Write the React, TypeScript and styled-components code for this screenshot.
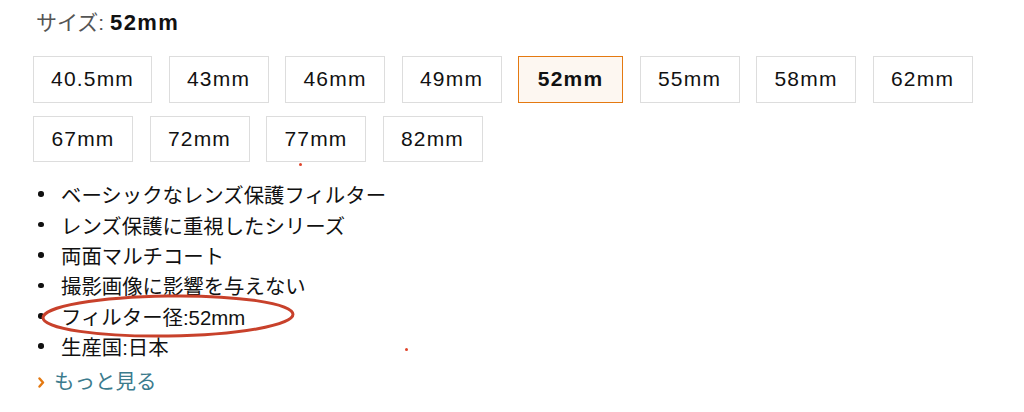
import React from 'react';
import styled, { createGlobalStyle } from 'styled-components';

const GlobalStyle = createGlobalStyle`
  html, body {
    margin: 0;
    padding: 0;
    background: #ffffff;
  }
  body {
    font-family: "Liberation Sans", "Noto Sans CJK JP", sans-serif;
    color: #111111;
  }
`;

const Page = styled.div`
  position: relative;
  width: 1024px;
  height: 412px;
  padding: 9px 0 0 33px;
  box-sizing: border-box;
  overflow: hidden;
`;

const Heading = styled.div`
  margin-left: 3px;
  font-size: 21px;
  line-height: 28px;
  color: #555555;
`;

const HeadingValue = styled.span`
  color: #111111;
  font-size: 22px;
  font-weight: 700;
  letter-spacing: 1.4px;
`;

const SizeGrid = styled.div`
  display: flex;
  flex-wrap: wrap;
  column-gap: 16.5px;
  row-gap: 13px;
  width: 960px;
  margin-top: 19px;
`;

const SizeButton = styled.div<{ $selected?: boolean }>`
  box-sizing: border-box;
  height: 46.5px;
  min-width: ${(p) => (p.$selected ? '105px' : '100px')};
  padding: 0 17px;
  display: flex;
  align-items: center;
  justify-content: center;
  font-size: 21px;
  letter-spacing: 1.2px;
  font-weight: ${(p) => (p.$selected ? 700 : 400)};
  color: #111111;
  background: ${(p) => (p.$selected ? '#fdf7f1' : '#ffffff')};
  border: 1px solid ${(p) => (p.$selected ? '#e47911' : '#dddddd')};
`;

const Features = styled.ul`
  list-style: none;
  margin: 17px 0 0;
  padding: 0;
`;

const Feature = styled.li`
  position: relative;
  display: flex;
  align-items: center;
  height: 30.4px;
  font-size: 20.4px;
  color: #111111;
`;

const Dot = styled.span`
  width: 5.5px;
  height: 5.5px;
  border-radius: 50%;
  background: #111111;
  margin: 0 17.5px 0 5px;
  flex-shrink: 0;
`;

const Circle = styled.svg`
  position: absolute;
  left: 8px;
  top: -7px;
  overflow: visible;
  pointer-events: none;
`;

const MoreLink = styled.a`
  display: flex;
  align-items: center;
  gap: 9px;
  margin: 6px 0 0 5px;
  font-size: 20.5px;
  line-height: 30px;
  color: #3b7b8d;
  text-decoration: none;
`;

const Speck = styled.span<{ $x: number; $y: number }>`
  position: absolute;
  left: ${(p) => p.$x}px;
  top: ${(p) => p.$y}px;
  width: 3px;
  height: 3px;
  border-radius: 50%;
  background: #e0442a;
`;

const sizes = ['40.5mm', '43mm', '46mm', '49mm', '52mm', '55mm', '58mm', '62mm', '67mm', '72mm', '77mm', '82mm'];

const features = [
  'ベーシックなレンズ保護フィルター',
  'レンズ保護に重視したシリーズ',
  '両面マルチコート',
  '撮影画像に影響を与えない',
  'フィルター径:52mm',
  '生産国:日本',
];

const App: React.FC = () => {
  const selected = '52mm';

  return (
    <Page>
      <GlobalStyle />
      <Heading>
        サイズ: <HeadingValue>{selected}</HeadingValue>
      </Heading>

      <SizeGrid>
        {sizes.map((size) => (
          <SizeButton key={size} $selected={size === selected}>
            {size}
          </SizeButton>
        ))}
      </SizeGrid>

      <Features>
        {features.map((text, index) => (
          <Feature key={index}>
            <Dot />
            {text}
            {index === 4 && (
              <Circle width="256" height="44" viewBox="0 0 256 44">
                <ellipse
                  cx="127"
                  cy="22"
                  rx="125"
                  ry="20"
                  fill="none"
                  stroke="#c8412b"
                  strokeWidth="3"
                  transform="rotate(-0.8 127 22)"
                />
              </Circle>
            )}
          </Feature>
        ))}
      </Features>

      <MoreLink href="#">
        <svg width="7" height="11" viewBox="0 0 7 11">
          <path d="M1.5 1.5 L5 5.5 L1.5 9.5" fill="none" stroke="#e47911" strokeWidth="2.4" strokeLinecap="round" strokeLinejoin="round" />
        </svg>
        もっと見る
      </MoreLink>

      <Speck $x={299} $y={163} />
      <Speck $x={405} $y={348} />
    </Page>
  );
};

export default App;
